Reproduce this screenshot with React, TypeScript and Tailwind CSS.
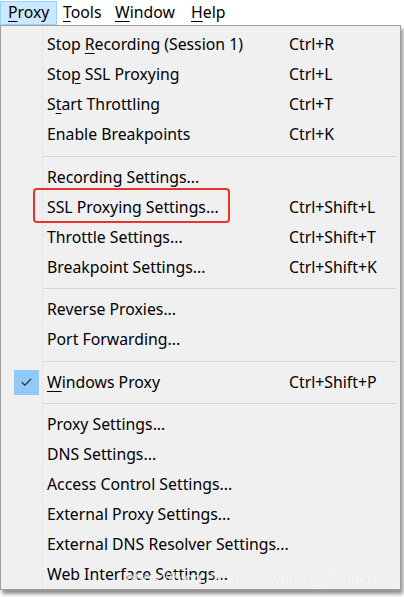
import React from 'react';
import { Check } from 'lucide-react';

type Item = {
  label: React.ReactNode;
  shortcut?: string;
  checked?: boolean;
};

const U: React.FC<{ children: React.ReactNode }> = ({ children }) => (
  <span className="underline decoration-1 underline-offset-[3px]">{children}</span>
);

const groups: Item[][] = [
  [
    { label: <>Stop <U>R</U>ecording (Session 1)</>, shortcut: 'Ctrl+R' },
    { label: <>Sto<U>p</U> SSL Proxying</>, shortcut: 'Ctrl+L' },
    { label: <>S<U>t</U>art Throttling</>, shortcut: 'Ctrl+T' },
    { label: 'Enable Breakpoints', shortcut: 'Ctrl+K' },
  ],
  [
    { label: 'Recording Settings...' },
    { label: 'SSL Proxying Settings...', shortcut: 'Ctrl+Shift+L' },
    { label: 'Throttle Settings...', shortcut: 'Ctrl+Shift+T' },
    { label: 'Breakpoint Settings...', shortcut: 'Ctrl+Shift+K' },
  ],
  [{ label: 'Reverse Proxies...' }, { label: 'Port Forwarding...' }],
  [{ label: <><U>W</U>indows Proxy</>, shortcut: 'Ctrl+Shift+P', checked: true }],
  [
    { label: 'Proxy Settings...' },
    { label: 'DNS Settings...' },
    { label: 'Access Control Settings...' },
    { label: 'External Proxy Settings...' },
    { label: 'External DNS Resolver Settings...' },
    { label: 'Web Interface Settings...' },
  ],
];

const MenuRow: React.FC<{ item: Item }> = ({ item }) => (
  <div className="grid grid-cols-[46px_242px_1fr] h-[30px] items-center">
    <div className="flex justify-center pl-[4px]">
      {item.checked && (
        <div className="w-[25px] h-[25px] bg-[#91c9f7] flex items-center justify-center">
          <Check className="w-[13px] h-[13px] text-[#333]" strokeWidth={2.2} />
        </div>
      )}
    </div>
    <span className="whitespace-nowrap">{item.label}</span>
    <span className="whitespace-nowrap">{item.shortcut}</span>
  </div>
);

export default function App() {
  return (
    <div
      className="relative w-[404px] h-[597px] bg-white overflow-hidden text-[15.8px] text-black"
      style={{ fontFamily: '"Noto Sans", "Open Sans", sans-serif' }}
    >
      {/* menu bar */}
      <div className="flex h-[25px] items-center bg-white">
        <div className="h-[24px] w-[57px] flex items-center pl-[7px] bg-[#cce8ff] border border-[#99d1ff]">
          <U>P</U>roxy
        </div>
        <div className="pl-[6px] w-[58px]"><U>T</U>ools</div>
        <div className="w-[76px]"><U>W</U>indow</div>
        <div><U>H</U>elp</div>
      </div>

      {/* dropdown */}
      <div className="relative w-[401px] h-[565px] bg-[#f0f0f0] border border-[#a0a0a0] shadow-[2px_4px_4px_rgba(0,0,0,0.45)] pt-[4px]">
        <div className="absolute left-[41px] top-0 bottom-0 w-px bg-[#e6e6e6]" />
        {groups.map((g, gi) => (
          <div key={gi}>
            {gi > 0 && (
              <div className="h-[12.5px] flex items-center pl-[42px] pr-[3px]">
                <div className="h-px w-full bg-[#d7d7d7]" />
              </div>
            )}
            {g.map((item, i) => (
              <MenuRow key={i} item={item} />
            ))}
          </div>
        ))}
      </div>

      {/* annotation box */}
      <div className="absolute left-[33px] top-[188px] w-[197px] h-[35px] border-2 border-[#e8322c] rounded-[4px]" />

      {/* watermark */}
      <div
        className="absolute left-[126px] top-[566px] text-[15.5px] text-white/80 whitespace-nowrap [text-shadow:0_0_1px_rgba(0,0,0,0.1)]"
        style={{ fontFamily: '"Liberation Sans", Arial, sans-serif' }}
      >
        https://blog.csdn.net/weixin_37844113
      </div>
    </div>
  );
}
